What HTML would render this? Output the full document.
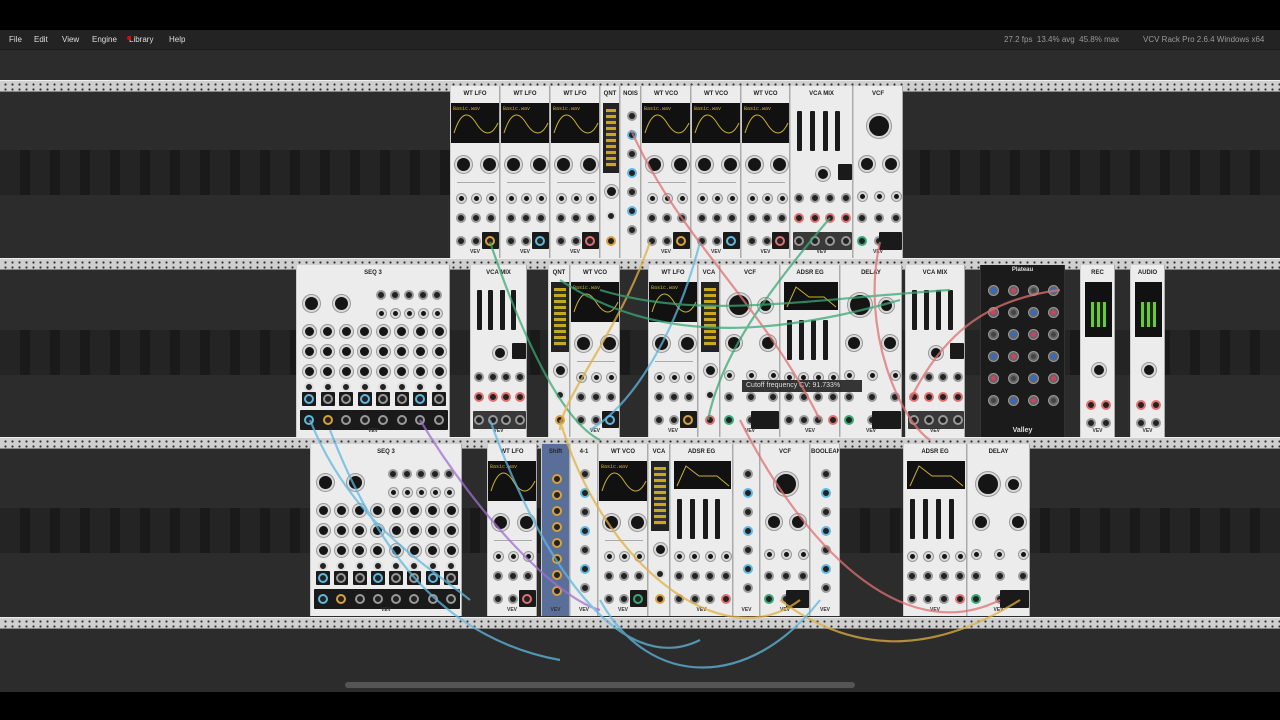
<!DOCTYPE html>
<html><head><meta charset="utf-8">
<style>
*{margin:0;padding:0;box-sizing:border-box}
body{width:1280px;height:720px;background:#2c2c2c;position:relative;overflow:hidden;font-family:"Liberation Sans",sans-serif}
.abs{position:absolute}
#top{left:0;top:0;width:1280px;height:30px;background:#000}
#menu{left:0;top:30px;width:1280px;height:20px;background:#232323;border-bottom:1px solid #1a1a1a;color:#ddd;font-size:8px;line-height:20px}
#menu span{position:absolute}
#bot{left:0;top:692px;width:1280px;height:28px;background:#000}
.rail{left:0;width:1280px;height:12px;background:#cfcfcf;border-top:1px solid #eee;border-bottom:1px solid #888;
 background-image:radial-gradient(circle,#333 0.9px,transparent 1.3px);background-size:7px 5px;background-position:2px 1px}
.band{left:0;width:1280px;background:#242424;
 background-image:repeating-linear-gradient(90deg,transparent 0 20px,#1a1a1a 20px 30px);}
.m{position:absolute;background:#ececec;border-left:1px solid #ccc;border-right:1px solid #aaa;overflow:hidden}
.m .t{position:absolute;left:0;right:0;top:5px;text-align:center;font-size:6px;font-weight:bold;color:#222}
.m .b{position:absolute;left:0;right:0;bottom:3px;text-align:center;font-size:5px;font-weight:bold;color:#333}
.d{position:absolute;background:#111}
.k{position:absolute;border-radius:50%;background:#151515;border:2px solid #d8d8d8;box-shadow:0 0 0 1px #999}
.j{position:absolute;border-radius:50%;background:#222;border:2px solid #999}
.bk{position:absolute;background:#1a1a1a;border-radius:1px}
</style></head><body>
<div id="top" class="abs"></div>
<div id="menu" class="abs">
<span style="left:9px">File</span><span style="left:34px">Edit</span><span style="left:62px">View</span><span style="left:92px">Engine</span><span style="left:129px">Library</span><span style="left:127px;top:6px;width:4px;height:4px;border-radius:50%;background:#e00"></span><span style="left:169px">Help</span>
<span style="left:1004px;color:#999">27.2 fps&nbsp; 13.4% avg&nbsp; 45.8% max</span><span style="left:1143px;color:#999">VCV Rack Pro 2.6.4 Windows x64</span>
</div>
<div class="abs band" style="top:150px;height:45px"></div>
<div class="abs band" style="top:330px;height:45px"></div>
<div class="abs band" style="top:508px;height:45px"></div>
<div class="abs rail" style="top:80px"></div>
<div class="abs rail" style="top:258px"></div>
<div class="abs rail" style="top:437px"></div>
<div class="abs rail" style="top:617px"></div>
<div class="abs" style="left:345px;top:682px;width:510px;height:6px;background:#555;border-radius:3px"></div>
<div id="mods"></div>
<div class="abs" style="left:742px;top:380px;width:120px;height:12px;background:#222;color:#ddd;font-size:7px;line-height:12px;padding-left:4px;opacity:.9">Cutoff frequency CV: 91.733%</div>
<div id="bot" class="abs"></div>
<svg class="abs" style="left:0;top:0" width="1280" height="720" fill="none" stroke-width="2.2" opacity="0.75">
<path d="M490 242 C520 330 560 420 600 440" stroke="#3aa876"/>
<path d="M631 130 C680 240 760 300 820 420" stroke="#e07070"/>
<path d="M650 242 C620 330 560 400 560 430" stroke="#e0b040"/>
<path d="M700 242 C680 320 640 400 590 430" stroke="#5fb8e0"/>
<path d="M880 242 C860 330 900 420 930 440" stroke="#e07070"/>
<path d="M830 218 C760 300 720 360 708 420" stroke="#3aa876"/>
<path d="M310 420 C350 520 420 560 470 600" stroke="#5fb8e0"/>
<path d="M420 420 C480 520 560 600 600 610" stroke="#a070d0"/>
<path d="M490 420 C540 560 620 680 700 640" stroke="#5fb8e0"/>
<path d="M560 420 C600 560 720 660 800 600" stroke="#e0b040"/>
<path d="M740 420 C800 540 900 650 1000 600" stroke="#e07070"/>
<path d="M600 290 C700 320 800 300 950 290" stroke="#3aa876"/>
<path d="M560 280 C650 340 760 340 900 300" stroke="#3aa876"/>
<path d="M780 600 C860 660 940 650 1020 600" stroke="#e0b040"/>
<path d="M910 400 C940 340 980 300 1060 290" stroke="#e07070"/>
<path d="M330 430 C380 560 450 640 560 660" stroke="#5fb8e0"/>
<path d="M600 600 C650 690 750 690 820 600" stroke="#5fb8e0"/>
</svg>
<script>
const M=[
[450,86,50,'WT LFO',1],[500,86,50,'WT LFO',1],[550,86,50,'WT LFO',1],[600,86,20,'QNT',2],[620,86,21,'NOIS',0],
[641,86,50,'WT VCO',1],[691,86,50,'WT VCO',1],[741,86,49,'WT VCO',1],[790,86,63,'VCA MIX',3],[853,86,50,'VCF',4],
[296,265,154,'SEQ 3',5],[470,265,57,'VCA MIX',3],[548,265,22,'QNT',2],[570,265,50,'WT VCO',1],[648,265,50,'WT LFO',1],[698,265,22,'VCA',2],
[720,265,60,'VCF',4],[780,265,60,'ADSR EG',6],[840,265,62,'DELAY',4],[905,265,60,'VCA MIX',3],[980,265,85,'Plateau',7],[1080,265,35,'REC',8],[1130,265,35,'AUDIO',8],
[310,444,152,'SEQ 3',5],[487,444,50,'WT LFO',1],[541,444,29,'Shift',9],[570,444,28,'4-1',0],[598,444,50,'WT VCO',1],[648,444,22,'VCA',2],
[670,444,63,'ADSR EG',6],[733,444,27,'',0],[760,444,50,'VCF',4],[810,444,30,'BOOLEAN',0],[903,444,64,'ADSR EG',6],[967,444,63,'DELAY',4]];
let h='';
const K=(x,y,s)=>`<div class="k" style="left:${x-s/2}px;top:${y-s/2}px;width:${s}px;height:${s}px"></div>`;
const J=(x,y,c)=>`<div class="j" style="left:${x-5}px;top:${y-5}px;width:10px;height:10px${c?';border-color:'+c:''}"></div>`;
const cols=['#d9a13a','#3aa876','#e07070','#5fb8e0',''];
for(const [x,y,w,t,ty] of M){
 let s='',H=172;
 if(ty==7){h+=`<div class="m" style="left:${x}px;top:${y}px;width:${w}px;height:${H}px;background:#1b1b1b;border-color:#333"><div class="t" style="color:#ddd;top:2px">${t}</div><div class="b" style="color:#ddd;font-size:7px">Valley</div>`;
  for(let r=0;r<6;r++)for(let c=0;c<4;c++)h+=K(12+c*20,25+r*22,9).replace('class="k" style="','class="k" style="border-color:#666;background:'+['#2a6cd0','#d04060','#444'][(r+c)%3]+';');
  h+='</div>';continue;}
 if(ty==1){s+=`<div class="d" style="left:0;top:17px;width:${w}px;height:40px"><svg width="${w}" height="40"><text x="2" y="7" font-size="5" fill="#c9b030" font-family="Liberation Mono">Basic.wav</text><path d="M3 30 Q${w/4} 0 ${w/2} 20 T${w-3} 20" stroke="#c9b030" fill="none"/></svg></div>`;
  s+=K(12,78,17)+K(w-12,78,17)+`<div class="abs" style="left:6px;top:96px;width:${w-12}px;height:1px;background:#aaa"></div>`;
  for(let i=0;i<3;i++){s+=K(10+i*15,112,9)+J(10+i*15,132,'')+J(10+i*15,155,i==2?cols[(x>>3)%4]:'');}
  s+=`<div class="bk" style="left:${w-19}px;top:146px;width:17px;height:17px"></div>`+J(w-11,155,cols[(x>>4)%4]);}
 else if(ty==2){s+=`<div class="d" style="left:2px;top:17px;width:${w-4}px;height:70px;background:#222"><div class="abs" style="left:3px;top:6px;width:${w-10}px;height:58px;background:repeating-linear-gradient(#c9a820 0 3px,#333 3px 6px)"></div></div>`+K(w/2,105,13)+J(w/2,130,'#ddd')+J(w/2,155,cols[x%4]);}
 else if(ty==3){for(let i=0;i<4;i++)s+=`<div class="bk" style="left:${6+i*(w-12)/4}px;top:25px;width:5px;height:40px"></div>`;
  s+=K(w/2,88,14)+`<div class="bk" style="left:${w-16}px;top:78px;width:14px;height:16px"></div>`;
  for(let i=0;i<4;i++){let cx=8+i*(w-16)/3;s+=J(cx,112,'')+J(cx,132,'#e07070')+J(cx,155,'');}
  s+=`<div class="bk" style="left:2px;top:146px;width:${w-4}px;height:18px;opacity:.85"></div>`;
  for(let i=0;i<4;i++)s+=J(8+i*(w-16)/3,155,'');}
 else if(ty==4){s+=K(w/2-(w>55?12:0),40,24);if(w>55)s+=K(w/2+14,40,15);s+=K(13,78,16)+K(w-13,78,16);
  let n=Math.floor(w/16);for(let i=0;i<n;i++){let cx=8+i*(w-16)/(n-1);s+=K(cx,110,9)+J(cx,132,'')+J(cx,155,i==0?'#3aa876':'');}
  s+=`<div class="bk" style="left:${w/2}px;top:146px;width:${w/2-2}px;height:18px"></div>`;}
 else if(ty==5){s+=K(14,38,17)+K(44,38,17);for(let i=0;i<5;i++)s+=J(w-70+i*14,30,'')+K(w-70+i*14,48,9);
  for(let r=0;r<3;r++)for(let c=0;c<8;c++)s+=K(12+c*(w-24)/7,66+r*20,13);
  for(let c=0;c<8;c++){let cx=12+c*(w-24)/7;s+=J(cx,122,'#ddd')+`<div class="bk" style="left:${cx-7}px;top:127px;width:14px;height:14px"></div>`+J(cx,134,c%3==0?'#5fb8e0':'');}
  s+=`<div class="bk" style="left:3px;top:145px;width:${w-6}px;height:20px"></div>`;for(let c=0;c<8;c++)s+=J(12+c*(w-24)/7,155,c==0?'#5fb8e0':c==1?'#d9a13a':'');}
 else if(ty==6){s+=`<div class="d" style="left:3px;top:17px;width:${w-6}px;height:28px"><svg width="${w}" height="28"><path d="M3 25 L12 5 L25 15 L${w-20} 15 L${w-8} 25" stroke="#c9b030" fill="none"/></svg></div>`;
  for(let i=0;i<4;i++)s+=`<div class="bk" style="left:${6+i*(w-12)/4}px;top:55px;width:5px;height:40px"></div>`;
  for(let i=0;i<4;i++){let cx=8+i*(w-16)/3;s+=K(cx,112,9)+J(cx,132,'')+J(cx,155,i==3?'#e07070':'');}}
 else if(ty==8){s+=`<div class="d" style="left:4px;top:17px;width:${w-8}px;height:55px;background:#111"><div class="abs" style="left:6px;top:20px;width:${w-20}px;height:25px;background:repeating-linear-gradient(90deg,#6c3 0 3px,#222 3px 6px)"></div></div>`+K(w/2,105,14)+J(10,140,'#e07070')+J(w-10,140,'#e07070')+J(10,158,'')+J(w-10,158,'');}
 else if(ty==9){s+=`<div class="abs" style="left:0;top:0;width:${w}px;height:${H}px;background:#5a6e9a"></div>`;for(let i=0;i<8;i++)s+=J(w/2,35+i*16,'#d9a13a');}
 else {for(let i=0;i<7;i++)s+=J(w/2,30+i*19,i%2?'#5fb8e0':'');}
 h+=`<div class="m" style="left:${x}px;top:${y}px;width:${w}px;height:${H}px">${s}<div class="t">${t}</div><div class="b">${w>25?'VEV':''}</div></div>`;
}
document.getElementById('mods').innerHTML=h;
</script>
</body></html>
